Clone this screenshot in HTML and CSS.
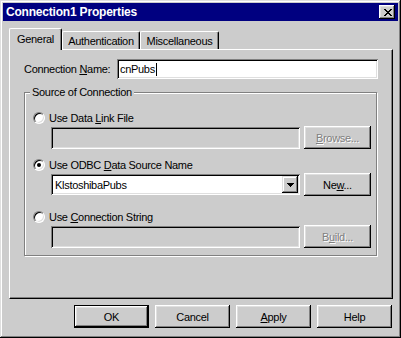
FILE: index.html
```html
<!DOCTYPE html>
<html>
<head>
<meta charset="utf-8">
<link rel="stylesheet" href="styles.css">
</head>
<body>
<div class="window">
  <div class="titlebar">
    <span class="title">Connection1 Properties</span>
    <span class="close"><svg width="8" height="7" viewBox="0 0 8 7" shape-rendering="crispEdges"><path fill="#000" d="M0 0h2v1H0zM6 0h2v1H6zM1 1h2v1H1zM5 1h2v1H5zM2 2h4v1H2zM3 3h2v1H3zM2 4h4v1H2zM1 5h2v1H1zM5 5h2v1H5zM0 6h2v1H0zM6 6h2v1H6z"/></svg></span>
  </div>
  <div class="body">
    <div class="tabs">
      <div class="tab active tab-general">General</div>
      <div class="tab tab-auth">Authentication</div>
      <div class="tab tab-misc">Miscellaneous</div>
    </div>
    <div class="panel">
      <div class="name-row">
        <span class="name-label">Connection <u>N</u>ame:</span>
        <div class="edit name-edit">cnPubs<span class="caret"></span></div>
      </div>
      <div class="group">
        <span class="legend">Source of Connection</span>
        <div class="opt"><span class="radio"></span><span class="opt-text">Use Data <u>L</u>ink File</span></div>
        <div class="ctl">
          <div class="edit disabled box"></div>
          <div class="btn small disabled-btn"><span><u>B</u>rowse...</span></div>
        </div>
        <div class="opt opt2"><span class="radio checked"></span><span class="opt-text">Use ODBC <u>D</u>ata Source Name</span></div>
        <div class="ctl">
          <div class="edit combo"><span class="combo-text">KlstoshibaPubs</span><span class="drop"><svg width="7" height="4" viewBox="0 0 7 4" shape-rendering="crispEdges"><path fill="#000" d="M0 0h7v1H0zM1 1h5v1H1zM2 2h3v1H2zM3 3h1v1H3z"/></svg></span></div>
          <div class="btn small"><span>Ne<u>w</u>...</span></div>
        </div>
        <div class="opt opt3"><span class="radio"></span><span class="opt-text">Use <u>C</u>onnection String</span></div>
        <div class="ctl">
          <div class="edit disabled box"></div>
          <div class="btn small disabled-btn"><span>B<u>u</u>ild...</span></div>
        </div>
      </div>
    </div>
    <div class="buttons">
      <div class="btn default"><span>OK</span></div>
      <div class="btn"><span>Cancel</span></div>
      <div class="btn"><span><u>A</u>pply</span></div>
      <div class="btn"><span>Help</span></div>
    </div>
  </div>
</div>
</body>
</html>
```

FILE: styles.css
```css
* { box-sizing: border-box; }
html, body { margin: 0; padding: 0; }
body {
  width: 401px;
  height: 338px;
  background: #cccccc;
  font-family: "Liberation Sans", Arial, sans-serif;
  font-size: 11px;
  letter-spacing: -0.3px;
  color: #000;
  overflow: hidden;
}
u { text-decoration: underline; text-underline-offset: 1px; }

.window {
  width: 401px;
  height: 338px;
  padding: 3px;
  background: #cccccc;
  box-shadow: inset -1px -1px #000, inset 1px 1px #dfdfdf, inset -2px -2px #808080, inset 2px 2px #fff;
  display: flex;
  flex-direction: column;
}

.titlebar {
  height: 18px;
  background: #000080;
  color: #fff;
  display: flex;
  align-items: center;
  justify-content: space-between;
  padding: 0 3px 0 3px;
}
.title {
  font-weight: bold;
  font-size: 12px;
  letter-spacing: -0.2px;
}
.close {
  width: 16px;
  height: 14px;
  background: #cccccc;
  box-shadow: inset -1px -1px #000, inset 1px 1px #fff, inset -2px -2px #808080, inset 2px 2px #dfdfdf;
  display: flex;
  align-items: center;
  justify-content: center;
  padding-left: 1px;
}
.close svg { display: block; }

.body {
  flex: 1;
  display: flex;
  flex-direction: column;
  padding: 7px 5px 0 6px;
}

.tabs {
  display: flex;
  align-items: flex-end;
  height: 21px;
}
.tab {
  height: 18px;
  background: #cccccc;
  border-top: 1px solid #fff;
  border-left: 1px solid #fff;
  border-right: 1px solid #000;
  border-radius: 2px 2px 0 0;
  box-shadow: inset -1px 0 #808080;
  display: flex;
  justify-content: center;
  align-items: center;
  padding-top: 1px;
}
.tab.active {
  height: 22px;
  margin-bottom: -1px;
  position: relative;
  z-index: 1;
  padding-top: 0;
  padding-bottom: 2px;
}
.tab-general { width: 53px; }
.tab-auth { width: 78px; }
.tab-misc { width: 79px; }

.panel {
  height: 250px;
  border-top: 1px solid #fff;
  border-left: 1px solid #fff;
  border-right: 1px solid #000;
  border-bottom: 1px solid #000;
  box-shadow: inset -1px -1px #808080;
  padding: 9px 14px 0 14px;
  display: flex;
  flex-direction: column;
}

.name-row {
  display: flex;
  align-items: center;
  height: 20px;
}
.name-label { width: 93px; }
.edit {
  background: #fff;
  box-shadow: inset 1px 1px #808080, inset -1px -1px #fff, inset 2px 2px #000, inset -2px -2px #dfdfdf;
}
.name-edit {
  width: 261px;
  height: 20px;
  padding: 0 3px;
  display: flex;
  align-items: center;
}
.caret {
  display: inline-block;
  width: 1px;
  height: 13px;
  background: #000;
  margin-left: 1px;
}

.group {
  position: relative;
  margin-top: 13px;
  width: 353px;
  height: 164px;
  border: 1px solid #808080;
  box-shadow: inset 1px 1px #fff, 1px 1px #fff;
  padding: 17px 5px 0 8px;
  display: flex;
  flex-direction: column;
}
.legend {
  position: absolute;
  top: -8px;
  left: 5px;
  padding: 0 2px;
  background: #cccccc;
  line-height: 14px;
}

.opt {
  display: flex;
  align-items: center;
  height: 16px;
}
.opt2 { margin-top: 8px; }
.opt3 { margin-top: 13px; }
.radio {
  position: relative;
  width: 12px;
  height: 12px;
  border-radius: 50%;
  background: #fff;
  border: 1px solid;
  border-color: #808080 #fff #fff #808080;
  box-shadow: inset 1px 1px #000, inset -1px -1px #dfdfdf;
  flex: none;
}
.radio.checked::after {
  content: "";
  position: absolute;
  left: 3px;
  top: 3px;
  width: 4px;
  height: 4px;
  border-radius: 50%;
  background: #000;
}
.opt-text { margin-left: 4px; }

.ctl {
  display: flex;
  align-items: center;
  justify-content: space-between;
  height: 23px;
  padding-left: 18px;
}
.box {
  width: 249px;
  height: 22px;
}
.edit.disabled { background: #cccccc; }
.combo {
  width: 249px;
  height: 21px;
  padding: 2px;
  display: flex;
  align-items: center;
  justify-content: space-between;
}
.combo-text { padding-left: 2px; }
.drop {
  width: 16px;
  height: 17px;
  background: #cccccc;
  box-shadow: inset -1px -1px #000, inset 1px 1px #dfdfdf, inset -2px -2px #808080, inset 2px 2px #fff;
  display: flex;
  align-items: center;
  justify-content: center;
}
.drop svg { display: block; }

.btn {
  width: 75px;
  height: 23px;
  background: #cccccc;
  box-shadow: inset -1px -1px #000, inset 1px 1px #fff, inset -2px -2px #808080, inset 2px 2px #dfdfdf;
  display: flex;
  align-items: center;
  justify-content: center;
}
.btn.small { width: 67px; }
.btn.default {
  border: 1px solid #000;
  box-shadow: inset -1px -1px #000, inset 1px 1px #fff, inset -2px -2px #808080, inset 2px 2px #dfdfdf;
}
.disabled-btn { color: #808080; text-shadow: 1px 1px #fff; }

.buttons {
  display: flex;
  justify-content: flex-end;
  gap: 6px;
  margin-top: 6px;
  padding-right: 1px;
}
```
